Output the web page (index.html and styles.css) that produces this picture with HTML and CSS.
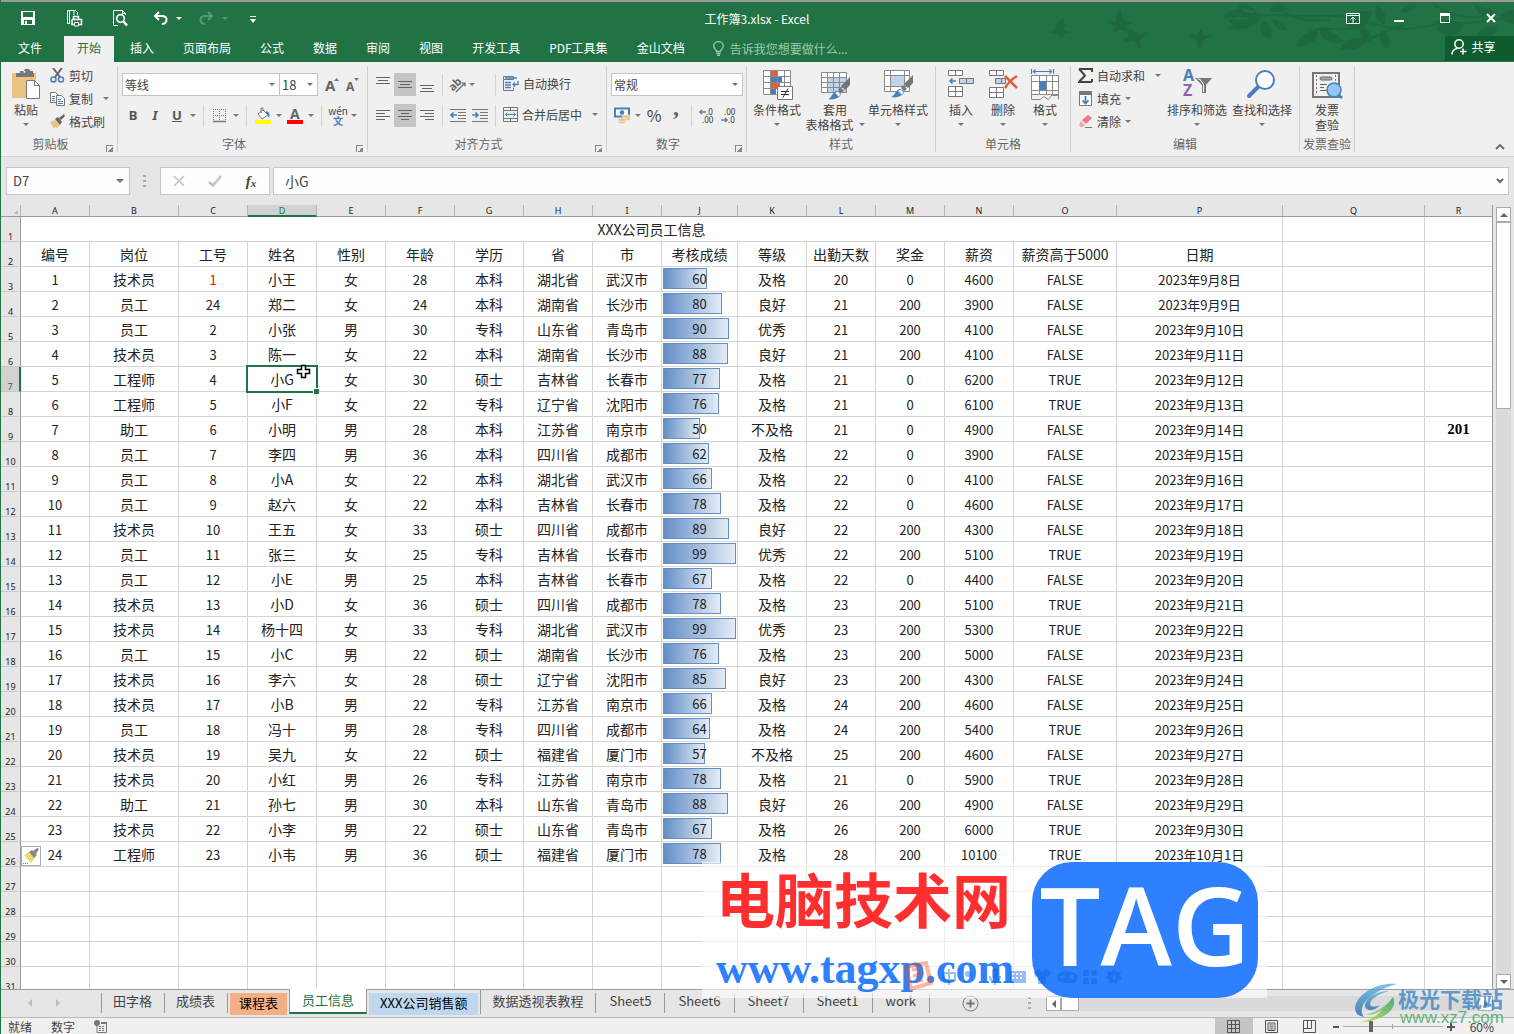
FILE: index.html
```html
<!DOCTYPE html>
<html lang="zh-CN">
<head>
<meta charset="utf-8">
<title>工作簿3.xlsx - Excel</title>
<link rel="stylesheet" href="styles.css">
</head>
<body>
<div class="window">
  <header class="top">
    <svg class="foliage" width="470" height="60" viewBox="0 0 470 60" aria-hidden="true">
      <g fill="#1e6840">
        <path d="M20 16c-7 2-8 8-9 12l-7 3 8 1 6 3 2-3 8-1-8-3c2-3 2-6 0-9z"/>
        <path d="M76 6c-5 5-4 9-4 13l-7 1 7 4-3 7 7-4 6 2 1-5 6-4-8-1-3-5c0-4-1-5-2-8z"/>
        <path d="M83 27c7 0 9 3 11 6l10-2-8 6 1 11c-4-3-6-6-7-9-5 2-8 0-11-1l5-3c1-3 0-5-1-8z"/>
        <path d="M145 33c3-1 6-1 8 0l4-6c2 2 2 4 2 6l9 1-8 3-3 11c-5-4-5-8-4-11-4 0-6-1-8-4z"/>
        <path d="M180 13c14-10 28-8 38 1-12 4-26 6-38-1zM184 18c6 8 20 10 30 1-10-5-22-5-30-1zM216 16c-16 0-25 7-32 10 12 4 28 0 32-10zM218 18c-3 9-2 15 8 19 4-8 0-15-8-19zM228 17c8 1 12 6 16 11-9 1-15-3-16-11zM212 10c-2-6-12-8-18-6 5 7 12 9 18 6zM225 8c5-7 15-5 20-2-6 5-14 6-20 2z"/>
        <path d="M252 44c0-8 10-14 22-18 1 11-6 19-22 18zM275 26c5-1 14 4 26 13-14 5-24 0-26-13zM296 47c4-9 12-13 29-11-6 10-18 14-29 11zM302 23c3-12 13-16 26-13-2 12-13 19-26 13zM316 24c8 2 12 8 10 16-9-3-12-9-10-16zM338 28c8 5 9 10 6 19-9-4-10-12-6-19z"/>
        <path d="M388 20c10-4 22-3 33 4-11 4-24 5-33-4zM391 26c8-3 18-3 27 0-6 10-18 11-27 0zM333 3c8 4 10 11 7 20-9-5-11-13-7-20zM430 3c10 4 16 1 23 9-12 5-20 1-23-9zM433 34c4-9 11-12 21-8-4 9-11 12-21 8zM456 14c5-4 10-6 14-6v14c-6 0-11-3-14-8zM372 4c-4 6-10 8-16 6 4-6 9-8 16-6z"/>
      </g>
      <g fill="none" stroke="#1e6840" stroke-width="2">
        <path d="M180 16c30-8 60 0 95-2s50 8 72 12 45-6 70-5 35-5 53-6"/>
        <path d="M273 27c12-2 28 4 48-4M322 38c10-2 20-12 38-14M390 4c14 4 20 14 50 10M240 10c12 8 30 10 46 8"/>
      </g>
    </svg>
    <div class="titlebar">
      <div class="quick">
        <button class="q" aria-label="保存"><svg width="14" height="14" viewBox="0 0 14 14"><path d="M0 0h14v14H0zM2 1v5h10V1zM3 9v4h1v-3h2v3h5V9z" fill="#fff" fill-rule="evenodd"/></svg></button>
        <button class="q" aria-label="打印"><svg width="17" height="17" viewBox="0 0 17 17" fill="none" stroke="#fff"><path d="M4 13.500H1.500V.5h8l2 2V5M3.500 1v12M8 .5V5"/><path d="M7.500 9V6.500h5V9M6 9.500h9.500v5H6v-5" stroke-width="1.500"/><path d="M8.500 12.500h4v3.500h-4z" fill="#217346"/></svg></button>
        <button class="q" aria-label="打印预览"><svg width="15" height="17" viewBox="0 0 15 17" fill="none" stroke="#fff"><path d="M5 15.500H.5V.5h9l3 3V5M9.500.5v3h3"/><circle cx="7.500" cy="8.500" r="3.800" stroke-width="1.700"/><path d="M10.500 11.500l3.500 4" stroke-width="2.500"/></svg></button>
        <button class="q undo" aria-label="撤消"><svg width="15" height="14" viewBox="0 0 15 14" fill="none" stroke="#fff" stroke-width="2"><path d="M6 1L2 5l4 4M2 5h7c6 0 6 7 0 8"/></svg><i class="caret w"></i></button>
        <button class="q undo dim" aria-label="恢复"><svg width="15" height="14" viewBox="0 0 15 14" fill="none" stroke="#fff" stroke-width="2"><path d="M9 1l4 4-4 4M13 5H6c-6 0-6 7 0 8"/></svg><i class="caret w"></i></button>
        <button class="q" aria-label="自定义快速访问工具栏"><svg width="6" height="7"><path d="M0 3h6L3 7zM0 0h6v1H0z" fill="#fff"/></svg></button>
      </div>
      <h1 class="title">工作簿3.xlsx - Excel</h1>
      <div class="winbtns">
        <button aria-label="功能区显示选项"><svg width="14" height="11" fill="none" stroke="#fff"><path d="M.5.5h13v10H.5zM1 2.500h12M7 10V5M4.500 6.500L7 4l2.500 2.500"/></svg></button>
        <button aria-label="最小化"><svg width="10" height="11"><path d="M0 7h10v2H0z" fill="#fff"/></svg></button>
        <button aria-label="最大化"><svg width="10" height="10"><path d="M0 0h10v10H0zM1 3v6h8V3z" fill="#fff" fill-rule="evenodd"/></svg></button>
        <button aria-label="关闭"><svg width="10" height="10"><path d="M1 1l8 8M9 1L1 9" stroke="#fff" stroke-width="2"/></svg></button>
      </div>
    </div>
    <nav class="tabs">
      <button class="tab file">文件</button>
      <button class="tab active">开始</button>
      <button class="tab">插入</button>
      <button class="tab">页面布局</button>
      <button class="tab">公式</button>
      <button class="tab">数据</button>
      <button class="tab">审阅</button>
      <button class="tab">视图</button>
      <button class="tab">开发工具</button>
      <button class="tab">PDF工具集</button>
      <button class="tab">金山文档</button>
      <button class="tab tell"><svg width="11" height="15" fill="none" stroke="#9fc9ae" stroke-width="1.300"><path d="M3.500 10.500c0-2-2.800-2.500-2.800-5.500a4.800 4.300 0 0 1 9.600 0c0 3-2.800 3.500-2.800 5.500zM3.500 12.500h4M4 14.300h3"/></svg>告诉我您想要做什么...</button>
      <button class="share"><svg width="16" height="16" fill="none" stroke="#fff" stroke-width="1.500"><circle cx="8" cy="5" r="4.200"/><path d="M1 15.500c0-3.500 2-5.500 5.500-6M12 9.500v6M9 12.500h6.500"/></svg>共享</button>
    </nav>
  </header>

  <section class="ribbon" aria-label="功能区">
    <div class="group g-clip">
      <div class="body">
        <button class="big paste"><svg width="30" height="32"><path d="M1 5h24v25H1z" fill="#eac282"/><path d="M5 5h4V3h4c0-3 6-3 6 0h3v2h1v4H5z" fill="#777"/><circle cx="13.500" cy="3.800" r="1" fill="#fff"/><path d="M15.500 12.500h8l5 5v13h-13z" fill="#fff" stroke="#777"/><path d="M23.500 12.500v5h5" fill="none" stroke="#777"/></svg><span>粘贴</span><i class="caret"></i></button>
        <div class="stack">
          <button class="small"><svg width="15" height="15"><path d="M3 0l7 9M12 0L5 9" stroke="#666" stroke-width="2"/><g fill="none" stroke="#4a80ba" stroke-width="1.500"><circle cx="3.500" cy="11.500" r="2.500"/><circle cx="11" cy="11.500" r="2.500"/></g></svg>剪切</button>
          <button class="small"><svg width="15" height="15" fill="#fff" stroke="#777"><path d="M.5 1.500h5l3 3v7h-8z"/><path d="M6.500 4.500h5l3 3v7h-8z"/><path d="M2 5.500h3M2 7.500h3M2 9.500h3M8 8.500h3M8 10.500h5M8 12.500h5" stroke="#4a80ba"/></svg>复制<i class="caret far"></i></button>
          <button class="small"><svg width="15" height="15"><path d="M0 8l5-2 5 5-3 3-2-1-1 2z" fill="#eac282"/><path d="M5 5l3-2 4 5-2 3zM9 4l5-4 1 2-4 4z" fill="#666"/></svg>格式刷</button>
        </div>
      </div>
      <div class="label">剪贴板<button class="launch" aria-label="剪贴板设置"></button></div>
    </div>

    <div class="group g-font">
      <div class="rows">
        <div class="row">
          <select class="combo face" aria-label="字体"><option>等线</option></select><select class="combo size" aria-label="字号"><option>18</option></select>
          <button class="ic a-up" aria-label="增大字号"><svg width="16" height="18"><text x="1" y="15" class="ga big-a">A</text><path d="M10 5h5l-2.500-3z" fill="#4a80ba"/></svg></button>
          <button class="ic a-dn" aria-label="减小字号"><svg width="16" height="18"><text x="1" y="15" class="ga">A</text><path d="M9 2h5l-2.500 3z" fill="#4a80ba"/></svg></button>
        </div>
        <div class="row">
          <button class="ic b">B</button><button class="ic it">I</button><button class="ic un">U</button><i class="caret"></i><i class="vsep"></i>
          <button class="ic" aria-label="边框"><svg width="14" height="14" fill="none" stroke="#777"><path d="M.5 0v12M12.500 0v12M6.500 0v12M0 .5h13M0 6.500h13" stroke-dasharray="1 1"/><path d="M0 12.500h13" stroke-width="1.500"/></svg></button><i class="caret"></i><i class="vsep"></i>
          <button class="ic" aria-label="填充颜色"><svg width="18" height="17"><path d="M4 7l5-4 5 5-6 4z" fill="#fff" stroke="#777"/><path d="M7 6V1h2v3" fill="none" stroke="#777"/><path d="M12 4c4 1 4 4 3 7-1-2-1-4-3-5z" fill="#4a80ba"/><path d="M1 13h16v4H1z" fill="#ff0"/></svg></button><i class="caret"></i>
          <button class="ic fc" aria-label="字体颜色"><svg width="16" height="19"><text x="3" y="13" class="ga fc-a">A</text><path d="M0 14h16v4H0z" fill="#f00"/></svg></button><i class="caret"></i><i class="vsep"></i>
          <button class="ic py" aria-label="拼音"><span>wén</span><b>文</b></button><i class="caret"></i>
        </div>
      </div>
      <div class="label">字体<button class="launch" aria-label="字体设置"></button></div>
    </div>

    <div class="group g-align">
      <div class="rows">
        <div class="row">
          <button class="ic" aria-label="顶端对齐"><svg width="14" height="16"><path d="M0 0h14v1H0zM2 3h10v1H2zM0 6h14v1H0z" fill="#666"/></svg></button>
          <button class="ic on" aria-label="垂直居中"><svg width="14" height="16"><path d="M0 4h14v1H0zM2 7h10v1H2zM0 10h14v1H0z" fill="#666"/></svg></button>
          <button class="ic" aria-label="底端对齐"><svg width="14" height="16"><path d="M0 8h14v1H0zM2 11h10v1H2zM0 14h14v1H0z" fill="#666"/></svg></button><i class="vsep"></i>
          <button class="ic ori" aria-label="方向"><svg width="20" height="20"><text x="0" y="13" transform="rotate(-45 7 9)" class="ab">ab</text><path d="M8 17l9-9M13.500 8H17v3.500" fill="none" stroke="#666" stroke-width="1.200"/></svg></button><i class="caret"></i><i class="vsep gap"></i>
          <button class="small wrap"><svg width="16" height="15" fill="none" stroke="#777"><path d="M.5.5h10v3h-10zM.5 3.500v11h10v-3"/><path d="M2 2h12M2 6.500h6M2 9h6M2 11.500h6M15 5v3.500H10M12 6.500l-2 2 2 2" stroke="#4a80ba" stroke-width="1.300"/></svg>自动换行</button>
        </div>
        <div class="row">
          <button class="ic" aria-label="左对齐"><svg width="14" height="13"><path d="M0 1h14v1H0zM0 4h9v1H0zM0 7h14v1H0zM0 10h9v1H0z" fill="#666"/></svg></button>
          <button class="ic on" aria-label="居中"><svg width="14" height="13"><path d="M0 1h14v1H0zM3 4h8v1H3zM0 7h14v1H0zM3 10h8v1H3z" fill="#666"/></svg></button>
          <button class="ic" aria-label="右对齐"><svg width="14" height="13"><path d="M0 1h14v1H0zM5 4h9v1H5zM0 7h14v1H0zM5 10h9v1H5z" fill="#666"/></svg></button><i class="vsep"></i>
          <button class="ic" aria-label="减少缩进"><svg width="16" height="13"><path d="M0 0h16v1H0zM8 3h8v1H8zM8 6h8v1H8zM8 9h8v1H8zM0 12h16v1H0z" fill="#777"/><path d="M7 6H1M3.500 3.500L1 6l2.500 2.500" fill="none" stroke="#4a80ba" stroke-width="1.700"/></svg></button>
          <button class="ic" aria-label="增加缩进"><svg width="16" height="13"><path d="M0 0h16v1H0zM8 3h8v1H8zM8 6h8v1H8zM8 9h8v1H8zM0 12h16v1H0z" fill="#777"/><path d="M0 6h6M3.500 3.500L6 6 3.500 8.500" fill="none" stroke="#4a80ba" stroke-width="1.700"/></svg></button><i class="vsep near"></i>
          <button class="small wrap"><svg width="15" height="15" fill="none" stroke="#777"><path d="M.5.5h14v14H.5zM.5 3.500h14M.5 11.500h14M7.500.5v3M7.500 11.500v3"/><path d="M2.500 7.500h10M4.500 5.500l-2 2 2 2M10.500 5.500l2 2-2 2" stroke="#4a80ba"/></svg>合并后居中<i class="caret far"></i></button>
        </div>
      </div>
      <div class="label">对齐方式<button class="launch" aria-label="对齐设置"></button></div>
    </div>

    <div class="group g-num">
      <div class="rows">
        <div class="row"><select class="combo fmt" aria-label="数字格式"><option>常规</option></select></div>
        <div class="row">
          <button class="ic" aria-label="会计数字格式"><svg width="17" height="17"><path d="M1 1.500h14v8H1z" fill="#fff" stroke="#4a80ba" stroke-width="2"/><circle cx="8" cy="5.500" r="2.300" fill="#4a80ba"/><g fill="#eac282" stroke="#f0f0f0" stroke-width=".7"><ellipse cx="12.500" cy="12" rx="4" ry="1.700"/><ellipse cx="12.500" cy="9.500" rx="4" ry="1.700"/><ellipse cx="8" cy="15" rx="4" ry="1.700"/><ellipse cx="8" cy="12.800" rx="4" ry="1.700"/></g></svg></button><i class="caret"></i>
          <button class="ic pct">%</button><button class="ic com">,</button><i class="vsep"></i>
          <button class="ic" aria-label="增加小数位数"><svg width="18" height="18"><text x="8" y="8" class="dec">.0</text><text x="4" y="16" class="dec">.00</text><path d="M8 5H2M4 3L2 5l2 2" fill="none" stroke="#4a80ba" stroke-width="1.500"/></svg></button>
          <button class="ic" aria-label="减少小数位数"><svg width="18" height="18"><text x="4" y="8" class="dec">.00</text><text x="8" y="16" class="dec">.0</text><path d="M1 13h6M5 11l2 2-2 2" fill="none" stroke="#4a80ba" stroke-width="1.500"/></svg></button>
        </div>
      </div>
      <div class="label">数字<button class="launch" aria-label="数字设置"></button></div>
    </div>

    <div class="group g-style">
      <div class="body">
        <button class="big w60"><svg width="32" height="32"><path d="M2.500 2.500h27v24h-27z" fill="#fff"/><path d="M10 2h6v6h-6zM10 15h9v5h-9z" fill="#dd6140"/><path d="M10 8.500h11v6H10zM10 20h5v6h-5z" fill="#4a80ba"/><path d="M2.500 2.500h27v24h-27zM2.500 8.500h27M2.500 14.500h27M2.500 20.500h27M9.500 2.500v24M16.500 2.500v24M23.500 2.500v24" fill="none" stroke="#8a8a8a"/><path d="M16.500 18.500h15v13h-15z" fill="#fff" stroke="#777"/><path d="M20 23.500h8M20 26.500h8M27 20.500l-5 9" stroke="#333"/></svg><span>条件格式</span><i class="caret"></i></button>
        <button class="big w56"><svg width="32" height="32"><path d="M2.500 4.500h25v20h-25z" fill="#fff"/><path d="M8 9h20v16H8z" fill="#c0d3e9"/><path d="M2.500 4.500h25v20h-25zM2.500 9.500h25M2.500 14.500h25M2.500 19.500h25M8.500 4.500v20M14.500 4.500v20M20.500 4.500v20" fill="none" stroke="#8a8a8a"/><path d="M31 9v8l-5 5-4-4zM21 19l4 4-3 2-3-3z" fill="#777"/><path d="M9 31c4-1 4-7 9-8 4 1 5 4 2 6s-7 3-11 2z" fill="#4a80ba"/><path d="M17 26c2-2 4 0 2 2" stroke="#fff" stroke-width="2" fill="none"/></svg><span>套用</span><span>表格格式<i class="caret"></i></span></button>
        <button class="big w70"><svg width="32" height="32"><path d="M2.500 2.500h25v21h-25z" fill="#fff"/><path d="M2.500 2.500h25v21h-25zM2.500 7.500h25M2.500 18.500h25M8.500 2.500v21M22.500 2.500v21" fill="none" stroke="#8a8a8a"/><path d="M9 8h13v10H9z" fill="#c0d3e9"/><path d="M31 7v8l-5 5-4-4zM21 17l4 4-3 2-3-3z" fill="#777"/><path d="M9 29c4-1 4-7 9-8 4 1 5 4 2 6s-7 3-11 2z" fill="#4a80ba"/><path d="M17 24c2-2 4 0 2 2" stroke="#fff" stroke-width="2" fill="none"/></svg><span>单元格样式</span><i class="caret"></i></button>
      </div>
      <div class="label">样式</div>
    </div>

    <div class="group g-cells">
      <div class="body">
        <button class="big w42"><svg width="30" height="32" fill="#fff" stroke="#777"><path d="M2.500 2.500h14v5h-14zM9.500 2.500v5M2.500 18.500h14v10h-14zM9.500 18.500v10M2.500 23.500h14"/><path d="M13.500 10.500h14v5h-14zM20.500 10.500v5" fill="#c0d3e9"/><path d="M10 13H4M6.500 10.500L4 13l2.500 2.500" fill="none" stroke="#4a80ba" stroke-width="1.700"/></svg><span>插入</span><i class="caret"></i></button>
        <button class="big w42"><svg width="30" height="32" fill="#fff" stroke="#777"><path d="M1.500 2.500h14v5h-14zM8.500 2.500v5M1.500 19.500h14v10h-14zM8.500 19.500v10M1.500 24.500h14"/><path d="M7.500 10.500h10v5h-10zM13.500 10.500v5" fill="#c0d3e9"/><path d="M17 8l12 12M29 8c-5 3-9 7-12 12" fill="none" stroke="#dd6140" stroke-width="2.500"/></svg><span>删除</span><i class="caret"></i></button>
        <button class="big w42"><svg width="30" height="32"><path d="M1.500 7.500h27v19h-27z" fill="#fff"/><path d="M1.500 7.500h27v24M1.500 7.500v24h9l3-3 5 3 3-4h7M1.500 13.500h27M1.500 22.500h27M9.500 7.500v19M16.500 7.500v19M22.500 7.500v19M1.500 26.500h27" fill="none" stroke="#8a8a8a"/><path d="M9 13h7v9H9z" fill="#4a80ba"/><path d="M1.500 1v5M23.500 1v5M3 3.500h19M5.500 1.500l-2 2 2 2M19.500 1.500l2 2-2 2" fill="none" stroke="#4a80ba" stroke-width="1.200"/></svg><span>格式</span><i class="caret"></i></button>
      </div>
      <div class="label">单元格</div>
    </div>

    <div class="group g-edit">
      <div class="body">
        <div class="stack">
          <button class="small"><svg width="15" height="15"><path d="M1 1h13v3M14 14v-3M1 1l6 6.500L1 14h13" fill="none" stroke="#444" stroke-width="2"/></svg>自动求和<i class="caret far"></i></button>
          <button class="small"><svg width="15" height="15"><path d="M1.500 1.500h12v13h-12z" fill="#fff" stroke="#777"/><path d="M1 0h13v4H1z" fill="#777"/><path d="M7.500 5v8M4.500 9.500l3 3 3-3" fill="none" stroke="#4a80ba" stroke-width="1.800"/></svg>填充<i class="caret"></i></button>
          <button class="small"><svg width="15" height="15"><path d="M4 6l6-5 4 3-6 6z" fill="#e8788f"/><path d="M3 7l4 4-2 2H3L1 11z" fill="#f0a5b3"/><path d="M7 13.500h7" stroke="#777"/></svg>清除<i class="caret"></i></button>
        </div>
        <button class="big w64"><svg width="32" height="32"><text x="2" y="13" class="az" fill="#4a80ba">A</text><text x="2" y="28" class="az" fill="#935fb3">Z</text><path d="M14 10h17l-6 7v8h-4v-8z" fill="#777"/><path d="M16.500 11h2l4 5v8" fill="none" stroke="#fff"/></svg><span>排序和筛选</span><i class="caret"></i></button>
        <button class="big w66"><svg width="32" height="32"><path d="M3 28l9-9" stroke="#4a80ba" stroke-width="4" stroke-linecap="round"/><circle cx="19" cy="12" r="9" fill="#fff" stroke="#4a80ba" stroke-width="2"/></svg><span>查找和选择</span><i class="caret"></i></button>
      </div>
      <div class="label">编辑</div>
    </div>

    <div class="group g-inv">
      <div class="body">
        <button class="big w54"><svg width="32" height="32"><path d="M2 5h26v24H2z" fill="none" stroke="#777" stroke-width="2"/><path d="M5.500 7v20M24.500 7v12" stroke="#777" stroke-dasharray="2 2"/><rect x="9" y="9" width="12" height="3" rx="1.500" fill="#aaa" stroke="#666"/><path d="M9 16.500h7M9 19.500h4M9 22.500h7" stroke="#666"/><path d="M26 25l5 5" stroke="#3a86b8" stroke-width="2.500"/><circle cx="23" cy="22" r="7" fill="#94c5f5" stroke="#3a86b8" stroke-width="1.500"/></svg><span>发票</span><span>查验</span></button>
      </div>
      <div class="label">发票查验</div>
    </div>
    <button class="collapse" aria-label="折叠功能区"><svg width="10" height="7"><path d="M1 6l4-4 4 4" fill="none" stroke="#666" stroke-width="1.800"/></svg></button>
  </section>

  <div class="formula">
    <div class="box namebox"><input aria-label="名称框" value="D7"><button aria-label="名称列表"><i class="caret lg"></i></button></div>
    <i class="dots"></i>
    <div class="box fx">
      <button aria-label="取消"><svg width="12" height="12"><path d="M1 1l10 10M11 1L1 11" stroke="#c3c3c3" stroke-width="1.700"/></svg></button>
      <button aria-label="输入"><svg width="14" height="12"><path d="M1 7l4 3.500L13 1" fill="none" stroke="#c3c3c3" stroke-width="2.500"/></svg></button>
      <button aria-label="插入函数" class="fn">f<small>x</small></button>
    </div>
    <div class="box edit"><input aria-label="编辑栏" value="小G"><button aria-label="展开编辑栏"><svg width="8" height="6"><path d="M1 1l3 3 3-3" fill="none" stroke="#666" stroke-width="2"/></svg></button></div>
  </div>

  <main class="sheet">
    <div class="cells">
      <table class="grid">
        <colgroup><col class="c-row"><col class="c-std"><col class="c-b"><col class="c-std" span="7"><col class="c-j"><col class="c-std" span="4"><col class="c-o"><col class="c-p"><col class="c-q"><col></colgroup>
        <thead><tr id="letters"></tr></thead>
        <tbody id="rows"></tbody>
      </table>
    </div>
    <div class="vscroll">
      <button aria-label="向上滚动"><i class="tri up"></i></button>
      <div class="thumb"></div>
      <div class="rest"></div>
      <button aria-label="向下滚动"><i class="tri down"></i></button>
    </div>
  </main>

  <footer>
    <div class="sheets">
      <div class="navs"><i class="tri left faint"></i><i class="tri right faint"></i></div>
      <button class="st">田字格</button><button class="st">成绩表</button><button class="st tint orange"><span>课程表</span></button><button class="st current">员工信息</button><button class="st tint blue"><span>XXX公司销售额</span></button><button class="st">数据透视表教程</button><button class="st latin">Sheet5</button><button class="st latin">Sheet6</button><button class="st latin">Sheet7</button><button class="st latin">Sheet1</button><button class="st latin">work</button>
      <button class="add" aria-label="新工作表"><svg width="17" height="17" fill="none" stroke="#777"><circle cx="8.500" cy="8.500" r="7.500"/><path d="M8.500 4.500v8M4.500 8.500h8" stroke-width="2"/></svg></button>
      <i class="dots"></i>
      <div class="hscroll">
        <button aria-label="向左滚动"><i class="tri left"></i></button><div class="thumb"></div><div class="rest"></div><button aria-label="向右滚动"><i class="tri right"></i></button>
      </div>
    </div>
    <div class="status">
      <span>就绪</span><span>数字</span>
      <svg width="13" height="13" fill="none" stroke="#777"><path d="M3 4.500v8h9.500v-10H7"/><path d="M7 3h6" stroke-width="2"/><path d="M5 6.500h6M5 8.500h6M5 10.500h6" stroke-dasharray="2 1"/><circle cx="3" cy="3" r="3" fill="#777" stroke="none"/></svg>
      <div class="views">
        <button class="on" aria-label="普通"><svg width="13" height="13" fill="none" stroke="#555"><path d="M.5.5h12v12H.5zM.5 4.500h12M.5 8.500h12M4.500.5v12M8.500.5v12"/></svg></button>
        <button aria-label="页面布局"><svg width="13" height="13" fill="none" stroke="#555"><path d="M.5.5h12v12H.5zM3 3h7v7.500H3zM4.500 5h4M4.500 7h4M4.500 9h4"/></svg></button>
        <button aria-label="分页预览"><svg width="13" height="13" fill="none" stroke="#555"><path d="M.5.500h12v12H.5zM.5 8.500h8v-8M4.500.5v8"/></svg></button>
      </div>
      <button class="zb" aria-label="缩小"><svg width="6" height="8"><path d="M0 3h6v2H0z" fill="#555"/></svg></button>
      <input class="zoom" type="range" min="10" max="190" value="60" aria-label="显示比例">
      <button class="zb" aria-label="放大"><svg width="8" height="8"><path d="M0 3h8v2H0zM3 0h2v8H3z" fill="#555"/></svg></button>
      <span class="pct60">60%</span>
    </div>
  </footer>

  <aside class="mark-tag">
    <div class="words"><strong>电脑技术网</strong><b>www.tagxp.com</b></div>
    <div class="badge">TAG</div>
  </aside>
  <svg class="ime" width="230" height="34" viewBox="0 0 230 34" aria-hidden="true">
    <path d="M4 7l20-4 5 20-20 6z" fill="none" stroke="#f24a1d" stroke-width="4"/><path d="M10 10l10-2M11 16l11-3M13 22l8-2" stroke="#f24a1d" stroke-width="3"/>
    <g fill="#0062dc"><path d="M41 12h5v-3h2v3h6v9h-6v4h-2v-4h-5zm2 2v5h3v-5zm5 0v5h4v-5z" fill-rule="evenodd"/><circle cx="66" cy="14" r="3"/><rect x="90" y="8" width="6" height="12" rx="3"/><path d="M87 16h2c0 6 8 6 8 0h2c0 5-3 6-5 6v3h-2v-3c-3 0-5-2-5-6z"/><path d="M108 11h16v12h-16zm2 2v2h2v-2zm4 0v2h2v-2zm4 0v2h2v-2zm-8 4v2h2v-2zm4 0v2h2v-2zm4 0v2h2v-2z" fill-rule="evenodd"/><path d="M132 12l5-3c2 3 4 3 6 0l6 3-2 5-3-1v8h-8v-8l-3 1z"/><path d="M163 10h2v2c12-2 14 11 5 11h-9c-9 0-7-13 2-11zm-5 6v2h5v-2zm10-1v4h4v-4z" fill-rule="evenodd"/><rect x="181" y="10" width="6" height="6" rx="1"/><rect x="189" y="10" width="6" height="6" rx="3"/><rect x="181" y="18" width="6" height="6" rx="1"/><rect x="189" y="18" width="6" height="6" rx="1"/><path d="M212 9l3 3 4-1-1 5 2 3-4 1-1 4-3-2-4 2-1-4-4-2 3-3-1-4 4 1zm-1 6v5h2v-5z" fill-rule="evenodd"/></g>
  </svg>
  <aside class="mark-xz">
    <svg width="44" height="42" viewBox="0 0 44 42" aria-hidden="true"><defs><linearGradient id="sw" x1="0" y1="0" x2="0" y2="1"><stop offset="0" stop-color="#5fb4e0"/><stop offset="1" stop-color="#2a6dae"/></linearGradient><linearGradient id="sg" x1="1" y1="0" x2="0" y2="1"><stop offset="0" stop-color="#2da26a"/><stop offset="1" stop-color="#c6de44"/></linearGradient></defs><path d="M43 1C24-1 3 10 1 25c0 6 4 8 9 9-7-9 2-24 33-33z" fill="url(#sw)"/><path d="M35 8C22 8 11 15 11 23c1 6 10 5 15-1-4 2-9 3-10-1 0-5 9-10 19-13z" fill="url(#sw)"/><path d="M39 14c6 13-11 24-35 26 13-3 20-8 24-13-6 4-12 6-16 4 10-1 20-7 27-17z" fill="url(#sg)"/></svg>
    <div><strong>极光下载站</strong><span>www.xz7.com</span></div>
  </aside>
</div>
<script src="app.js"></script>
</body>
</html>
```
FILE: styles.css
```css
* { box-sizing: border-box; }
body { margin: 0; font: 12px/16px "Noto Sans CJK SC", sans-serif; color: #444; }
button, input, select { font: inherit; color: inherit; background: none; border: 0; padding: 0; margin: 0; outline: 0; }
button { display: flex; align-items: center; justify-content: center; white-space: nowrap; }
svg { display: block; flex: none; }
i { font-style: normal; flex: none; }
.window { position: relative; display: flex; flex-direction: column; height: 100vh; border-left: 1px solid #217346; background: #e6e6e6; overflow: hidden; }

.caret { border: 3px solid transparent; border-top-color: #777; border-bottom: 0; width: 6px; height: 3px; }
.caret.w { border-top-color: #fff; }
.caret.lg { border-width: 4px; border-bottom: 0; width: 8px; height: 4px; }
.tri { width: 0; height: 0; border: 4px solid transparent; }
.tri.up { border-bottom-color: #666; border-top: 0; }
.tri.down { border-top-color: #666; border-bottom: 0; }
.tri.left { border-right-color: #666; border-left: 0; }
.tri.right { border-left-color: #666; border-right: 0; }
.tri.left.faint { border-right-color: #bbb; }
.tri.right.faint { border-left-color: #bbb; }

/* title bar and ribbon tabs */
.top { position: relative; background: #217346; border-top: 2px solid #999; color: #fff; margin-left: -1px; flex: none; }
.foliage { position: absolute; right: 0; top: 0; }
.titlebar { position: relative; display: grid; grid-template-columns: 1fr auto 1fr; align-items: center; height: 34px; }
.quick { display: flex; padding-left: 5px; }
.q { width: 46px; height: 30px; gap: 8px; padding-bottom: 2px; }
.q.undo { width: 44px; margin-left: 2px; }
.q.dim { opacity: .25; }
.q:last-child { width: 32px; margin-left: 2px; padding: 0; }
.title { margin: 0; font-size: 12px; font-weight: 400; }
.winbtns { display: flex; justify-content: flex-end; }
.winbtns button { width: 46px; height: 30px; padding-bottom: 2px; }
.tabs { position: relative; display: flex; gap: 3px; height: 26px; padding-left: 5px; }
.tab { padding: 0 13px 3px; }
.file { margin-right: 6px; }
.active { background: #f0f0f0; color: #217346; }
.tell { color: #9fc9ae; gap: 6px; padding-left: 12px; padding-bottom: 1px; }
.share { margin-left: auto; width: 69px; background: #0f5c2f; gap: 4px; padding: 0 12px 4px 0; border-bottom: 1px solid #217346; }

/* ribbon */
.ribbon { display: flex; background: #f0f0f0; border-bottom: 1px solid #d4d4d4; padding: 4px 0; height: 95px; flex: none; }
.group { display: flex; flex-direction: column; border-right: 1px solid #d0d0d0; }
.g-clip { width: 117px; }
.g-font { width: 250px; }
.g-align { width: 239px; }
.g-num { width: 140px; }
.g-style { width: 189px; }
.g-cells { width: 135px; }
.g-edit { width: 229px; }
.g-inv { width: 55px; }
.body { display: flex; flex: 1; }
.label { display: flex; justify-content: center; align-items: center; height: 16px; color: #666; white-space: nowrap; }
.launch { width: 7px; height: 7px; border: 1px solid #888; border-right: 0; border-bottom: 0; background: linear-gradient(135deg, transparent 50%, #888 50%) right bottom / 5px 5px no-repeat; }
.label:has(.launch) { display: grid; grid-template-columns: 1fr 7px; justify-items: center; column-gap: 6px; padding: 0 4px 0 0; }
.label:has(.launch) .launch { align-self: end; }
.big { flex-direction: column; justify-content: flex-start; padding-top: 2px; }
.big span { display: flex; align-items: center; line-height: 15px; gap: 5px; }
.big svg { margin-bottom: 2px; }
.big > .caret { margin-top: 6px; }
.paste { width: 44px; margin-left: 3px; }
.w42 { width: 42px; }
.w54 { width: 54px; }
.w56 { width: 56px; }
.w60 { width: 60px; }
.w64 { width: 64px; }
.w66 { width: 66px; }
.w70 { width: 70px; }
.g-cells .body { padding-left: 4px; }
.stack { display: flex; flex-direction: column; gap: 2px; margin-left: 2px; }
.g-edit .stack { width: 87px; margin-left: 7px; }
.small { justify-content: flex-start; height: 21px; gap: 4px; padding-bottom: 2px; }
.far { margin-left: 6px; }
.rows { display: flex; flex-direction: column; gap: 8px; flex: 1; padding: 7px 4px 0; }
.row { display: flex; align-items: center; height: 23px; }
.ic { width: 22px; height: 23px; flex: none; }
.on { background: #c5c5c5; }
.vsep { width: 1px; height: 22px; background: #d4d4d4; margin: 0 5px; }
.combo { appearance: none; flex: none; height: 23px; border: 1px solid #c3c3c3; background: #fff url("data:image/svg+xml,%3Csvg xmlns='http://www.w3.org/2000/svg' width='6' height='3'%3E%3Cpath d='M0 0h6L3 3z' fill='%23777'/%3E%3C/svg%3E") right 4px center no-repeat; padding-left: 2px; }
.face { width: 158px; }
.size { width: 39px; margin-left: -1px; font-size: 13px; }
.fmt { width: 132px; }
.a-up { margin-left: 3px; }
.a-dn { width: 20px; }
.g-font .row + .row .caret, .g-num .caret { margin: 0 2px; }
.b, .it, .un { font: bold 13px "Noto Sans", sans-serif; color: #555; padding-bottom: 2px; }
.it { font-style: italic; }
.un { text-decoration: underline; }
.ga { font: bold 12px "Noto Sans", sans-serif; fill: #666; }
.big-a { font-size: 15px; }
.fc-a { font-size: 14px; }
.ab { font: bold 11px "Noto Sans", sans-serif; fill: #666; }
.dec { font: 8px "Noto Sans", sans-serif; fill: #333; }
.az { font: bold 16px "Noto Sans", sans-serif; }
.py { flex-direction: column; font-size: 10px; line-height: 10px; }
.py b { color: #4a80ba; }
.g-align .vsep { margin: 0 4px; }
.g-align .vsep.gap { margin: 0 7px 0 20px; }
.g-align .vsep.near { margin: 0 7px 0 4px; }
.pct { font-size: 16px; padding-bottom: 2px; }
.com { font: bold 24px "Liberation Serif", serif; padding-bottom: 16px; color: #666; }
.g-num .vsep { margin: 0 4px; }
.g-num .rows { padding-right: 0; }
.g-align .rows { padding-right: 0; }
.collapse { margin: auto 9px 0 auto; height: 12px; }

/* formula bar */
.formula { display: flex; align-items: center; height: 48px; padding: 0 5px; flex: none; font-size: 14px; }
.box { display: flex; align-items: center; height: 28px; border: 1px solid #c6c6c6; background: #fdfdfd; }
.box input { flex: 1; min-width: 0; }
.namebox { width: 124px; padding: 0 5px 0 6px; font-size: 13px; }
.dots { width: 3px; height: 12px; margin: 0 14px 0 13px; background: repeating-linear-gradient(#aaa 0 2px, transparent 2px 5px); }
.fx { width: 110px; justify-content: space-around; }
.fx button { width: 30px; }
.fn { font: italic bold 15px "Liberation Serif", serif; }
.fn small { font-size: 11px; padding-top: 3px; }
.edit { flex: 1; margin-left: 3px; padding: 0 4px 0 11px; }

/* worksheet */
.sheet { display: flex; flex: 1; min-height: 0; border-bottom: 1px solid #9b9b9b; }
.cells { flex: 1; min-width: 0; overflow: hidden; border-right: 1px solid #9b9b9b; background: #fff; }
.grid { width: 100%; table-layout: fixed; border-collapse: separate; border-spacing: 0; color: #222; }
.c-row { width: 20px; }
.c-std { width: 69px; }
.c-b { width: 89px; }
.c-j { width: 76px; }
.c-o { width: 103px; }
.c-p { width: 166px; }
.c-q { width: 142px; }
.grid th { padding: 0; font: 9px/10px "Noto Sans", sans-serif; background: #e6e6e6; border: solid #9b9b9b; border-width: 0 1px 1px 0; color: #222; }
.grid thead th { height: 12px; border-right-color: #b5b5b5; }
.grid thead th:last-child { border-right: 0; }
.grid thead th.sel { background: #d2d2d2; color: #217346; border-bottom: 2px solid #217346; line-height: 9px; }
.grid tbody th { vertical-align: bottom; border-bottom-color: #c8c8c8; line-height: 9px; }
.grid tbody th.sel { background: #d2d2d2; color: #217346; border-right: 2px solid #217346; }
.grid thead .corner { background: linear-gradient(135deg, transparent 50%, #bbb 50%) 12px 4px / 5px 5px no-repeat #e6e6e6; }
.grid td { height: 25px; padding: 0; border: solid #d4d4d4; border-width: 0 1px 1px 0; text-align: center; font-size: 14px; line-height: 20px; white-space: nowrap; }
.grid td:last-child { border-right: 0; }
.grid td.n { font-size: 13px; padding-top: 1px; }
.grid td.red { color: #f00; }
.grid td.serif { font: bold 15px/20px "Liberation Serif", serif; color: #000; }
.grid td.score { padding: 0; }
.meter { display: grid; height: 24px; padding: 1px; }
.meter > * { grid-area: 1 / 1; }
.meter i { height: 21px; border: 1px solid #638ec6; background: linear-gradient(90deg, #638ec6, #e4ecf6); }
.meter span { padding-top: 1px; }
.grid td.pick { position: relative; }
.pick::after { content: ""; position: absolute; inset: -2px; border: 2px solid #217346; }
.handle { position: absolute; right: -3px; bottom: -3px; width: 6px; height: 6px; background: #217346; border: solid #fff; border-width: 1px 0 0 1px; z-index: 1; }
.pointer { position: absolute; left: 48px; top: -3px; z-index: 2; }
.brush { position: absolute; left: 0; top: 4px; padding: 1px; width: 20px; height: 20px; background: #fff; border: 1px solid #aaa; }
.grid td.host { position: relative; }
.vscroll { display: flex; flex-direction: column; width: 15px; margin: 2px 3px 0; }
.vscroll button, .hscroll button { width: 15px; height: 15px; background: #fff; border: 1px solid #ababab; flex: none; }
.thumb { background: #fff; border: 1px solid #ababab; }
.vscroll .thumb { height: 187px; }
.rest { flex: 1; background: #dadada; }

/* sheet tabs */
.sheets { display: flex; height: 28px; border-bottom: 1px solid #bbb; font-size: 13px; }
.navs { display: flex; gap: 24px; padding-left: 27px; align-items: center; width: 101px; border-right: 1px solid #999; margin: 3px 0 4px; }
.st { height: 24px; padding: 0 12px 2px 11px; flex: none; }
.st:not(.tint):not(.current) { border-right: 1px solid #999; margin: 3px 0 4px; height: 20px; padding-bottom: 4px; }
.st.latin { padding: 0 13px; }
.tint { padding: 0 2px; }
.tint span { height: 22px; padding: 0 9px; margin-top: 3px; line-height: 19px; color: #000; }
.orange span { background: #f4b084; }
.blue span { background: #bdd7ee; padding: 0 11px; }
.blue { border-right: 1px solid #999; }
.current { background: #fff; color: #217346; height: 25px; margin-top: -1px; border: solid #9b9b9b; border-width: 0 1px; border-bottom: 2px solid #217346; padding: 0 12px 1px; }
.add { margin: 5px 24px 0 32px; height: 17px; }
.sheets .dots { margin: 7px 15px 0 25px; }
.hscroll { display: flex; flex: 1; margin: 6px 21px 0 0; height: 15px; }
.hscroll .thumb { width: 18px; }

/* status bar */
.status { display: flex; align-items: center; height: 16px; background: #f0f0f0; padding: 1px 20px 0 7px; overflow: hidden; }
.status span { margin-right: 19px; }
.status .views { display: flex; margin-left: auto; }
.views button { width: 38px; height: 18px; }
.zb { margin-left: 4px; }
.status .zoom { appearance: none; width: 100px; height: 12px; margin: 0 0 0 4px; background: linear-gradient(#aaa, #aaa) center / 100% 1px no-repeat, linear-gradient(#aaa, #aaa) center / 1px 5px no-repeat; }
.zoom::-webkit-slider-thumb { appearance: none; width: 4px; height: 11px; background: #666; }
.status .pct60 { margin: 0 0 0 15px; }

/* overlays on the worksheet */
.ime { position: absolute; right: 382px; bottom: 40px; opacity: .4; }
.mark-tag { position: absolute; right: 247px; bottom: 36px; width: 565px; height: 136px; display: flex; justify-content: space-between; padding-right: 9px; background: rgba(255, 255, 255, .6); }
.words { display: flex; flex-direction: column; padding-left: 14px; }
.words strong { font-size: 59px; line-height: 72px; color: #ff2f2f; font-weight: 700; }
.words b { font: bold 44px/70px "Liberation Serif", serif; color: #2f80ff; }
.badge { width: 226px; height: 136px; border-radius: 40px; background: rgba(31, 118, 255, .93); color: #fff; font: 600 108px/126px "Open Sans", sans-serif; text-align: center; }
.mark-xz { position: absolute; right: 10px; bottom: 9px; display: flex; align-items: flex-end; opacity: .8; }
.mark-xz div { display: flex; flex-direction: column; }
.mark-xz strong { font-size: 21px; line-height: 26px; color: #3f87c6; font-weight: 700; }
.mark-xz span { font: 17px/14px "Liberation Sans", sans-serif; color: #3fa95c; padding-left: 2px; }
```
FILE: app.js
```js
const LETTERS = 'ABCDEFGHIJKLMNOPQR'.split('');
const HEADINGS = '编号 岗位 工号 姓名 性别 年龄 学历 省 市 考核成绩 等级 出勤天数 奖金 薪资 薪资高于5000 日期'.split(' ');
const STAFF = `技术员 1 小王 女 28 本科 湖北省 武汉市 60 及格 20 0 4600
员工 24 郑二 女 24 本科 湖南省 长沙市 80 良好 21 200 3900
员工 2 小张 男 30 专科 山东省 青岛市 90 优秀 21 200 4100
技术员 3 陈一 女 22 本科 湖南省 长沙市 88 良好 21 200 4100
工程师 4 小G 女 30 硕士 吉林省 长春市 77 及格 21 0 6200
工程师 5 小F 女 22 专科 辽宁省 沈阳市 76 及格 21 0 6100
助工 6 小明 男 28 本科 江苏省 南京市 50 不及格 21 0 4900
员工 7 李四 男 36 本科 四川省 成都市 62 及格 22 0 3900
员工 8 小A 女 22 本科 湖北省 武汉市 66 及格 22 0 4100
员工 9 赵六 女 22 本科 吉林省 长春市 78 及格 22 0 4600
技术员 10 王五 女 33 硕士 四川省 成都市 89 良好 22 200 4300
员工 11 张三 女 25 专科 吉林省 长春市 99 优秀 22 200 5100
员工 12 小E 男 25 本科 吉林省 长春市 67 及格 22 0 4400
技术员 13 小D 女 36 硕士 四川省 成都市 78 及格 23 200 5100
技术员 14 杨十四 女 33 专科 湖北省 武汉市 99 优秀 23 200 5300
员工 15 小C 男 22 硕士 湖南省 长沙市 76 及格 23 200 5000
技术员 16 李六 女 28 硕士 辽宁省 沈阳市 85 良好 23 200 4300
技术员 17 小B 男 22 专科 江苏省 南京市 66 及格 24 200 4600
员工 18 冯十 男 28 专科 四川省 成都市 64 及格 24 200 5400
技术员 19 吴九 女 22 硕士 福建省 厦门市 57 不及格 25 200 4600
技术员 20 小红 男 26 专科 江苏省 南京市 78 及格 21 0 5900
助工 21 孙七 男 30 本科 山东省 青岛市 88 良好 26 200 4900
技术员 22 小李 男 22 硕士 山东省 青岛市 67 及格 26 200 6000
工程师 23 小韦 男 36 硕士 福建省 厦门市 78 及格 28 200 10100`.split('\n').map(line => line.split(' '));

const TOP_SCORE = 99;
const POINTER = '<svg class="pointer" width="16" height="16"><path d="M5.500 1.500h4v4h4v4h-4v4h-4v-4h-4v-4h4z" fill="#fff" stroke="#000" stroke-width="1.500"/></svg>';
const BRUSH = '<button class="brush" aria-label="格式刷选项"><svg width="16" height="16"><path d="M1 7l5-3 6 6-4 5z" fill="#f2d96b"/><path d="M6 4l3-2 5 5-3 3zM10 3l4-3 2 1-3 5z" fill="#888"/><path d="M0 15.500h5" stroke="#888" stroke-dasharray="1 1"/></svg></button>';

function dateOf(index) {
  const day = index + 8;
  return day > 30 ? `2023年10月${day - 30}日` : `2023年9月${day}日`;
}

function cell(value, column, row) {
  const names = [];
  if (/^(\d|TRUE|FALSE)/.test(value)) names.push('n');
  if (column === 9 && row > 2 && value) {
    const width = (value / TOP_SCORE * 100).toFixed(1);
    return `<td class="n score"><div class="meter"><i style="width:${width}%"></i><span>${value}</span></div></td>`;
  }
  if (row === 3 && column === 2) names.push('red');
  if (row === 9 && column === 17) return `<td class="serif">201</td>`;
  if (row === 7 && column === 3) return `<td class="pick">${value}<b class="handle"></b>${POINTER}</td>`;
  if (row === 26 && column === 0) return `<td class="n host">${BRUSH}${value}</td>`;
  return `<td class="${names.join(' ')}">${value}</td>`;
}

document.getElementById('letters').innerHTML = '<th class="corner"></th>' +
  LETTERS.map(l => `<th${l === 'D' ? ' class="sel"' : ''}>${l}</th>`).join('');

let html = '';
for (let row = 1; row <= 31; row++) {
  html += `<tr><th${row === 7 ? ' class="sel"' : ''}>${row}</th>`;
  if (row === 1) {
    html += '<td colspan="16">XXX公司员工信息</td><td></td><td></td></tr>';
    continue;
  }
  let values = [];
  const person = STAFF[row - 3];
  if (row === 2) values = HEADINGS;
  else if (person) values = [row - 2, ...person, person[12] > 5000 ? 'TRUE' : 'FALSE', dateOf(row - 3)];
  html += LETTERS.map((_, column) => cell(values[column] ?? '', column, row)).join('') + '</tr>';
}
document.getElementById('rows').innerHTML = html;
```
